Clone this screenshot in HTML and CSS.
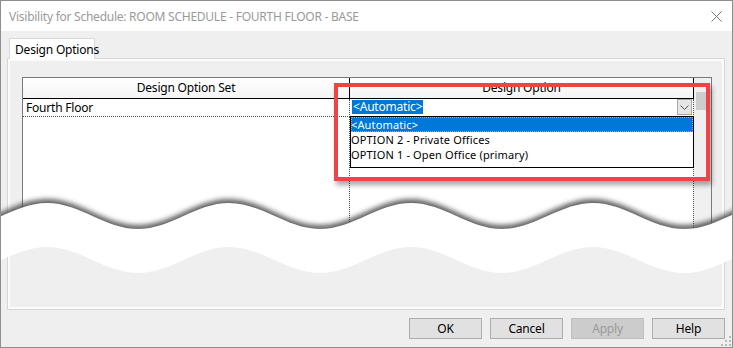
FILE: index.html
```html
<!DOCTYPE html>
<html lang="en">
<head>
  <meta charset="UTF-8" />
  <title>Visibility for Schedule</title>
  <link rel="stylesheet" href="styles.css">
</head>
<body>
  <div class="window">
    <div class="titlebar">
      <span class="title">Visibility for Schedule: ROOM SCHEDULE - FOURTH FLOOR - BASE</span>
      <svg class="close" width="11" height="11" viewBox="0 0 11 11">
        <path d="M0.5 0.5 L10.5 10.5 M10.5 0.5 L0.5 10.5" stroke="#7a7a7a" stroke-width="1" fill="none"/>
      </svg>
    </div>

    <div class="dialog-body">
      <div class="tabs">
        <div class="tab">Design Options</div>
      </div>

      <div class="tab-panel">
        <div class="grid">
          <div class="col col-set">
            <div class="head-cell">Design Option Set</div>
            <div class="row-cell">Fourth Floor</div>
            <div class="filler"></div>
          </div>

          <div class="col col-opt">
            <div class="head-cell">Design Option</div>
            <div class="row-cell combo">
              <span class="combo-value">&lt;Automatic&gt;</span>
              <span class="combo-btn">
                <svg width="9" height="5" viewBox="0 0 9 5"><path d="M0.5 0.5 L4.5 4.5 L8.5 0.5" stroke="#555" fill="none"/></svg>
              </span>
            </div>
            <div class="filler"></div>

            <!-- open dropdown list -->
            <ul class="dropdown">
              <li class="selected">&lt;Automatic&gt;</li>
              <li>OPTION 2 - Private Offices</li>
              <li>OPTION 1 - Open Office (primary)</li>
            </ul>
          </div>

          <div class="scrollbar">
            <div class="scroll-up">
              <svg width="7" height="4" viewBox="0 0 7 4"><path d="M0.5 3.5 L3.5 0.5 L6.5 3.5" stroke="#606060" fill="none"/></svg>
            </div>
            <div class="scroll-thumb"></div>
          </div>
        </div>
      </div>

      <div class="buttons">
        <button class="btn">OK</button>
        <button class="btn">Cancel</button>
        <button class="btn" disabled>Apply</button>
        <button class="btn">Help</button>
      </div>
    </div>

    <!-- callout around the dropdown -->
    <div class="highlight"></div>

    <!-- torn edge -->
    <svg class="tear" width="735" height="100" viewBox="0 0 735 100">
      <defs>
        <filter id="tear-shadow" x="-5%" y="-80%" width="110%" height="260%">
          <feGaussianBlur stdDeviation="2.6"/>
        </filter>
      </defs>
      <path class="tear-shade" transform="translate(0,-4)" filter="url(#tear-shadow)"
        d="M-135 13 C-102 13 -77 39 -44 39 C-11 39 14 13 47 13 C80 13 105 39 138 39 C171 39 196 13 229 13 C262 13 287 39 320 39 C353 39 378 13 411 13 C444 13 469 39 502 39 C535 39 560 13 593 13 C626 13 651 39 684 39 C717 39 742 13 775 13 L775 46 L-135 46 Z"/>
      <path fill="#ffffff"
        d="M-135 13 C-102 13 -77 39 -44 39 C-11 39 14 13 47 13 C80 13 105 39 138 39 C171 39 196 13 229 13 C262 13 287 39 320 39 C353 39 378 13 411 13 C444 13 469 39 502 39 C535 39 560 13 593 13 C626 13 651 39 684 39 C717 39 742 13 775 13
           L775 57 C742 57 717 83 684 83 C651 83 626 57 593 57 C560 57 535 83 502 83 C469 83 444 57 411 57 C378 57 353 83 320 83 C287 83 262 57 229 57 C196 57 171 83 138 83 C105 83 80 57 47 57 C14 57 -11 83 -44 83 C-77 83 -102 57 -135 57 Z"/>
    </svg>

    <svg class="grip" width="10" height="10" viewBox="0 0 10 10">
      <g fill="#b8b8b8">
        <rect x="8" y="0" width="2" height="2"/>
        <rect x="4" y="4" width="2" height="2"/><rect x="8" y="4" width="2" height="2"/>
        <rect x="0" y="8" width="2" height="2"/><rect x="4" y="8" width="2" height="2"/><rect x="8" y="8" width="2" height="2"/>
      </g>
    </svg>
  </div>
</body>
</html>
```

FILE: styles.css
```css
* { margin: 0; padding: 0; box-sizing: border-box; }

body {
  font-family: 'Noto Sans', 'Open Sans', sans-serif;
  font-size: 12px;
  color: #000;
  background: #ffffff;
}

.window {
  position: relative;
  width: 733px;
  height: 348px;
  border: 1px solid #8e8e8e;
  background-color: #efefef;
  overflow: hidden;
  display: flex;
  flex-direction: column;
}

.titlebar {
  height: 30px;
  background-color: #ffffff;
  display: flex;
  align-items: center;
  justify-content: space-between;
  padding: 0 10px 0 8px;
  flex-shrink: 0;
}

.title { color: #9a9a9a; font-size: 12px; letter-spacing: -0.25px; white-space: nowrap; }
.close { display: block; margin-top: 1px; }

.dialog-body {
  flex: 1;
  display: flex;
  flex-direction: column;
  padding: 7px 7px 0 6px;
}

.tabs { display: flex; height: 20px; padding-left: 2px; }
.tab {
  width: 86px;
  height: 21px;
  border: 1px solid #d9d9d9;
  border-bottom: none;
  background-color: #ffffff;
  padding: 2px 0 0 5px;
  position: relative;
  z-index: 1;
  font-size: 12px;
  letter-spacing: -0.2px;
  white-space: nowrap;
}

.tab-panel {
  height: 252px;
  border: 1px solid #d6d6d6;
  box-shadow: inset 0 0 0 2px #fbfbfb;
  background-color: #efefef;
  padding: 18px 0 0 14px;
}

/* data grid */
.grid {
  width: 690px;
  height: 162px;
  border: 1px solid #7a7a7a;
  background-color: #ffffff;
  display: flex;
}

.col { display: flex; flex-direction: column; }
.col-set { width: 327px; }
.col-opt { width: 344px; position: relative; }

.head-cell {
  height: 21px;
  border-bottom: 1px solid #000;
  border-right: 1px solid #000;
  background: linear-gradient(#ffffff, #f4f4f4);
  text-align: center;
  line-height: 19px;
  letter-spacing: -0.2px;
}

.row-cell {
  height: 18px;
  border-bottom: 1px dotted #4a4a4a;
  border-right: 1px dotted #4a4a4a;
  padding-left: 3px;
  line-height: 17px;
  letter-spacing: -0.2px;
}

.filler { flex: 1; border-right: 1px dotted #4a4a4a; }

.combo {
  display: flex;
  align-items: center;
  justify-content: space-between;
  padding: 0 1px 0 2px;
}

.combo-value {
  background-color: #0078d7;
  color: #ffffff;
  padding: 0 1px;
  line-height: 14px;
  margin-top: -1px;
}

.combo-btn {
  width: 15px;
  height: 16px;
  border: 1px solid #a8a8a8;
  background-color: #e6e6e6;
  display: flex;
  align-items: center;
  justify-content: center;
  margin-top: -1px;
}
.combo-btn svg { display: block; }

.dropdown {
  position: absolute;
  top: 38px;
  left: 0;
  width: 344px;
  height: 52px;
  border: 1px solid #000;
  background-color: #ffffff;
  list-style: none;
  z-index: 2;
}

.dropdown li {
  height: 15px;
  line-height: 15px;
  font-size: 11px;
  letter-spacing: 0.15px;
  white-space: nowrap;
  overflow: hidden;
}

.dropdown li.selected {
  background-color: #0078d7;
  color: #ffffff;
  outline: 1px dotted #f0a030;
  outline-offset: -1px;
}

.scrollbar {
  width: 17px;
  background-color: #f0f0f0;
  display: flex;
  flex-direction: column;
  align-items: center;
}

.scroll-up {
  height: 14px;
  width: 17px;
  display: flex;
  align-items: center;
  justify-content: center;
}
.scroll-up svg { display: block; }

.scroll-thumb {
  width: 13px;
  height: 18px;
  background-color: #cdcdcd;
}

/* bottom buttons */
.buttons {
  display: flex;
  justify-content: flex-end;
  gap: 8px;
  margin-top: 8px;
}

.btn {
  width: 73px;
  height: 21px;
  border: 1px solid #adadad;
  background-color: #e1e1e1;
  font-family: 'Noto Sans', 'Open Sans', sans-serif;
  font-size: 12px;
  color: #000;
  letter-spacing: -0.2px;
}

.btn:disabled {
  background-color: #cccccc;
  border-color: #bfbfbf;
  color: #9a9a9a;
}

/* overlays */
.highlight {
  position: absolute;
  left: 333px;
  top: 82px;
  width: 376px;
  height: 98px;
  border: 4px solid #ef4348;
  box-shadow: 2px 4px 5px rgba(0, 0, 0, 0.35);
  z-index: 5;
}

.tear {
  position: absolute;
  left: -1px;
  top: 189px;
  z-index: 6;
}

.tear-shade { fill: #4a4a4a; opacity: 0.85; }

.grip {
  position: absolute;
  right: 1px;
  bottom: 1px;
}
```
